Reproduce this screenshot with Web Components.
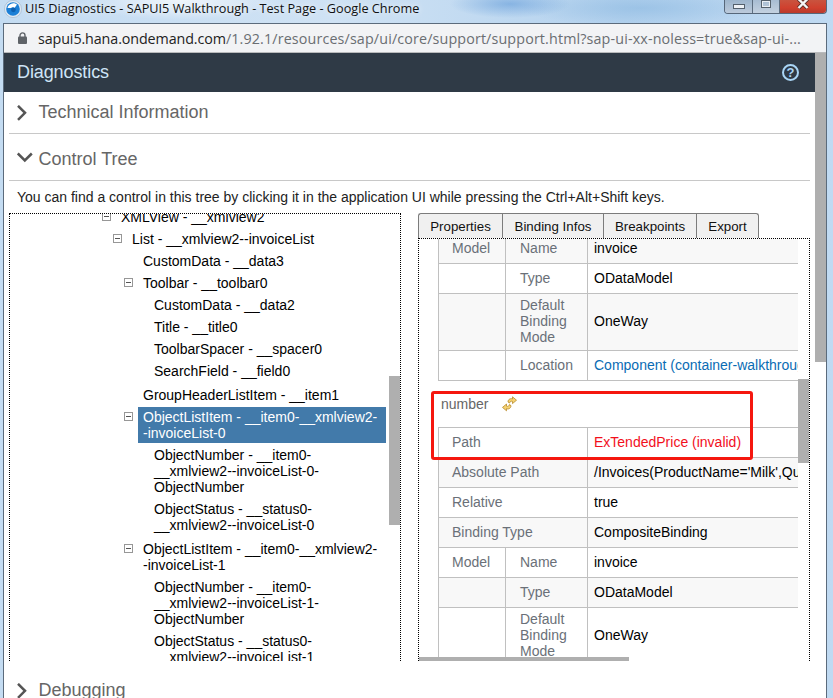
<!DOCTYPE html>
<html>
<head>
<meta charset="utf-8">
<title>UI5 Diagnostics</title>
<style>
  html, body { margin: 0; padding: 0; height: 100%; overflow: hidden; }
  body { font-family: "Liberation Sans", Arial, sans-serif; font-size: 14px; }
</style>
</head>
<body>
<diag-window>
  <diag-section heading="Technical Information" underline></diag-section>
  <diag-section heading="Control Tree" open underline gap="5">
    <diag-hint>You can find a control in this tree by clicking it in the application UI while pressing the Ctrl+Alt+Shift keys.</diag-hint>
    <diag-columns>
      <tree-panel>
        <tree-node toggle label="XMLView - __xmlview2">
          <tree-node toggle label="List - __xmlview2--invoiceList">
            <tree-node label="CustomData - __data3"></tree-node>
            <tree-node toggle label="Toolbar - __toolbar0">
              <tree-node label="CustomData - __data2"></tree-node>
              <tree-node label="Title - __title0"></tree-node>
              <tree-node label="ToolbarSpacer - __spacer0"></tree-node>
              <tree-node label="SearchField - __field0"></tree-node>
            </tree-node>
            <tree-node label="GroupHeaderListItem - __item1"></tree-node>
            <tree-node toggle selected label="ObjectListItem - __item0-__xmlview2-|-invoiceList-0">
              <tree-node label="ObjectNumber - __item0-|__xmlview2--invoiceList-0-|ObjectNumber"></tree-node>
              <tree-node label="ObjectStatus - __status0-|__xmlview2--invoiceList-0"></tree-node>
            </tree-node>
            <tree-node toggle label="ObjectListItem - __item0-__xmlview2-|-invoiceList-1">
              <tree-node label="ObjectNumber - __item0-|__xmlview2--invoiceList-1-|ObjectNumber"></tree-node>
              <tree-node label="ObjectStatus - __status0-|__xmlview2--invoiceList-1"></tree-node>
            </tree-node>
          </tree-node>
        </tree-node>
      </tree-panel>
      <tab-panel>
        <binding-table id="t1" style="margin-top:-6px"></binding-table>
        <binding-title>number</binding-title>
        <binding-table id="t2"></binding-table>
        <red-note></red-note>
      </tab-panel>
    </diag-columns>
  </diag-section>
  <diag-section heading="Debugging" gap="9"></diag-section>
</diag-window>

<script>
// window frame, title bar, address bar and the dark diagnostics header
const WINDOW_CSS = `
  :host {
    display: flex; flex-direction: column; width: 833px; height: 698px; overflow: hidden;
    background:
      radial-gradient(60px 14px at 510px 4px, rgba(90,150,215,0.55), transparent),
      radial-gradient(120px 18px at 640px 8px, rgba(140,185,225,0.6), transparent),
      radial-gradient(100px 20px at 180px 0, rgba(255,255,255,0.7), transparent),
      linear-gradient(90deg, #c4dcf2, #cfe2f4 40%, #b4d2ee 75%, #c0daf2);
  }
  .title { height: 23px; flex: none; display: flex; align-items: flex-start; }
  .logo { margin: 0 0 0 4px; flex: none; }
  .title-text {
    margin: 0 0 0 3px; font: 12.7px/17px "Open Sans", sans-serif; color: #101010;
    text-shadow: 0 0 6px rgba(255,255,255,0.9); white-space: nowrap;
  }
  .controls {
    margin-left: auto; margin-right: 6px; width: 103px; height: 14px; display: flex; box-sizing: border-box;
    border: 1px solid #56677a; border-top: 0; border-radius: 0 0 4px 4px; overflow: hidden;
  }
  .controls div { display: flex; justify-content: center; box-sizing: border-box; }
  .min { width: 28px; background: linear-gradient(#9db5cc, #bccadb); border-right: 1px solid #5c6d80; }
  .max { width: 27px; background: linear-gradient(#a7bcd2, #c3d1e0); border-right: 1px solid #5c6d80; }
  .close { flex: 1; background: linear-gradient(#c9543f, #d0402e 60%, #b93a2c); }
  .min i { width: 12px; height: 5px; margin-top: 4px; background: #eef2f6; border: 1px solid #54606c; box-sizing: border-box; }
  .max i { width: 10px; height: 8px; background: transparent; border: 2px solid #e8eef4; outline: 1px solid #54606c; outline-offset: -1px; box-sizing: border-box; }
  .frame {
    flex: 1; min-height: 0; margin: 0 6px 0 3px; border: 1px solid #5b6b7c; border-bottom: 0;
    display: flex; flex-direction: column; background: #fff;
  }
  .address {
    height: 28px; flex: none; display: flex; align-items: center; background: #f2f3f5;
    border-bottom: 1px solid #b9babc; box-sizing: content-box;
  }
  .lock { margin-left: 14px; flex: none; }
  .url { margin-left: 11px; font: 14.3px "Open Sans", sans-serif; color: #6a6e72; white-space: nowrap; letter-spacing: 0.14px; }
  .url b { font-weight: 400; color: #222; letter-spacing: -0.1px; }
  .body { flex: 1; min-height: 0; display: flex; }
  .main { flex: 1; min-width: 0; display: flex; flex-direction: column; overflow: hidden; }
  .bar { width: 11px; flex: none; background: #fff; }
  .bar div { height: 309px; background: #afafaf; }
  .head {
    height: 39px; flex: none; display: flex; align-items: center; justify-content: space-between;
    background: #2f3a46; padding: 0 16px 0 13px;
  }
  .head span { font-size: 18px; color: #cfe5f7; letter-spacing: -0.1px; }
  .help {
    width: 17px; height: 17px; border: 2px solid #a9d5f5; border-radius: 50%; box-sizing: border-box;
    display: flex; align-items: center; justify-content: center;
    font: bold 13px "Liberation Sans", sans-serif; color: #a9d5f5;
  }
  .sections { padding: 0 5px; flex: 1; min-height: 0; }
`

class DiagWindow extends HTMLElement {
  constructor() {
    super()
    this.attachShadow({ mode: 'open' })
    this.shadowRoot.innerHTML = `
      <style>${WINDOW_CSS}</style>
      <div class="title">
        <svg class="logo" width="18" height="18" viewBox="0 0 18 18">
          <circle cx="9" cy="9" r="8.6" fill="#dfe9f3" stroke="#9fb4c8" stroke-width="0.6"/>
          <circle cx="9" cy="9" r="6.8" fill="#1b7fd6"/>
          <path d="M3.5 8 A6 6 0 0 1 13 4.5 L10.5 8 A2.6 2.6 0 0 0 7 8 Z" fill="#fff"/>
          <circle cx="9.4" cy="9.8" r="2.4" fill="#0c5fb0"/>
        </svg>
        <span class="title-text">UI5 Diagnostics - SAPUI5 Walkthrough - Test Page - Google Chrome</span>
        <div class="controls">
          <div class="min"><i></i></div>
          <div class="max"><i></i></div>
          <div class="close">
            <svg width="14" height="9" viewBox="0 0 14 9"><path d="M2.5 -1 L11.5 8 M11.5 -1 L2.5 8" stroke="#58302a" stroke-width="4"/><path d="M2.5 -1 L11.5 8 M11.5 -1 L2.5 8" stroke="#f6f6f6" stroke-width="2.4"/></svg>
          </div>
        </div>
      </div>
      <div class="frame">
        <div class="address">
          <svg class="lock" width="9" height="12" viewBox="0 0 9 12">
            <path d="M2 5 V3.4 A2.5 2.5 0 0 1 7 3.4 V5" fill="none" stroke="#5f6368" stroke-width="1.4"/>
            <rect x="0" y="4.6" width="9" height="7.4" rx="1" fill="#5f6368"/>
          </svg>
          <span class="url"><b>sapui5.hana.ondemand.com</b>/1.92.1/resources/sap/ui/core/support/support.html?sap-ui-xx-noless=true&amp;sap-ui-...</span>
        </div>
        <div class="body">
          <div class="main">
            <div class="head"><span>Diagnostics</span><div class="help">?</div></div>
            <div class="sections"><slot></slot></div>
          </div>
          <div class="bar"><div></div></div>
        </div>
      </div>`
  }
}

// collapsible section with a chevron
class DiagSection extends HTMLElement {
  constructor() {
    super()
    this.attachShadow({ mode: 'open' })
  }

  connectedCallback() {
    const open = this.hasAttribute('open')
    const line = this.hasAttribute('underline')
    const gap = this.getAttribute('gap') || 0
    const chevron = open
      ? '<polyline points="0.8,1.5 7.8,8.5 14.8,1.5" />'
      : '<polyline points="1,0.8 8,7.8 1,14.8" />'
    this.shadowRoot.innerHTML = `
      <style>
        :host { display: block; margin-top: ${gap}px; }
        .head {
          height: 41px; display: flex; align-items: center; padding-left: 8px;
          font-size: 18px; color: #666; ${line ? 'border-bottom: 1px solid #c8c8c8;' : ''}
        }
        .chev { width: 22px; flex: none; display: flex; }
        .name { margin-left: -0.5px; }
        svg { fill: none; stroke: #555; stroke-width: 2.5; }
      </style>
      <div class="head">
        <span class="chev"><svg width="16" height="16" viewBox="0 0 16 16">${chevron}</svg></span>
        <span class="name">${this.getAttribute('heading')}</span>
      </div>
      <slot></slot>`
  }
}

class DiagHint extends HTMLElement {
  constructor() {
    super()
    this.attachShadow({ mode: 'open' })
    this.shadowRoot.innerHTML = `
      <style>:host { display: block; height: 32px; line-height: 33px; padding-left: 8px; color: #222; font-size: 14px; white-space: nowrap; }</style>
      <slot></slot>`
  }
}

class DiagColumns extends HTMLElement {
  constructor() {
    super()
    this.attachShadow({ mode: 'open' })
    this.shadowRoot.innerHTML = `
      <style>:host { display: grid; grid-template-columns: 392px 392px; column-gap: 17px; height: 448px; }</style>
      <slot></slot>`
  }
}

// left pane, the thumb lies over the scrolled content
class TreePanel extends HTMLElement {
  constructor() {
    super()
    this.attachShadow({ mode: 'open' })
    this.shadowRoot.innerHTML = `
      <style>
        :host {
          display: block; position: relative; overflow: hidden; box-sizing: border-box; height: 448px;
          border: 1px dotted #000; border-bottom: 0;
        }
        .scroll { margin-top: -7px; padding-left: 106px; }
        .thumb { position: absolute; right: 0; top: 162px; width: 11px; height: 149px; background: #afafaf; }
      </style>
      <div class="scroll"><slot></slot></div>
      <div class="thumb"></div>`
  }
}

class TreeNode extends HTMLElement {
  constructor() {
    super()
    this.attachShadow({ mode: 'open' })
  }

  connectedCallback() {
    const label = (this.getAttribute('label') || '').split('|').join('<br>')
    const toggle = this.hasAttribute('toggle')
      ? `<svg class="toggle" width="9" height="9" viewBox="0 0 9 9">
           <rect x="0.5" y="0.5" width="8" height="8" fill="#fff" stroke="#979797"/>
           <path d="M2 4.5 H7" stroke="#555"/>
         </svg>`
      : ''
    const selected = this.hasAttribute('selected')
    this.shadowRoot.innerHTML = `
      <style>
        :host { display: block; font-size: 14px; line-height: 16px; color: #000; }
        .row {
          position: relative; margin: 0 14px 2px 0; padding: 2px 5px; white-space: nowrap;
          ${selected ? 'background: #427aaa; color: #fff;' : ''}
        }
        .toggle { position: absolute; left: -14px; top: 5px; }
        .kids { padding-left: 11px; }
        .kids.has { padding-bottom: 2px; }
      </style>
      <div class="row">${toggle}${label}</div>
      <div class="kids ${this.children.length ? 'has' : ''}"><slot></slot></div>`
  }
}

// right pane with tab strip
const TABS = [['Properties', 84], ['Binding Infos', 101], ['Breakpoints', 93], ['Export', 63]]

class TabPanel extends HTMLElement {
  constructor() {
    super()
    this.attachShadow({ mode: 'open' })
    this.shadowRoot.innerHTML = `
      <style>
        :host { display: flex; flex-direction: column; height: 448px; font-size: 14px; }
        .tabs { height: 25px; flex: none; display: flex; }
        .tab {
          box-sizing: border-box; height: 25px; line-height: 25px; text-align: center; background: #f0f0f0; color: #111;
          font-size: 13.3px; border: 1px solid #7c7c7c; border-bottom: 0; border-right: 0; white-space: nowrap;
        }
        .tab:first-child { border-top-left-radius: 3px; }
        .tab:last-child { border-right: 1px solid #7c7c7c; border-top-right-radius: 3px; }
        .view {
          flex: 1; min-height: 0; position: relative; overflow: hidden; box-sizing: border-box;
          border: 1px dotted #000; border-bottom: 0;
        }
        .clip { width: 379px; height: 100%; overflow: hidden; }
        .vthumb { position: absolute; right: 0; top: 140px; width: 11px; height: 84px; background: #afafaf; }
        .hthumb { position: absolute; left: -1px; bottom: 0; width: 211px; height: 4px; background: #afafaf; }
      </style>
      <div class="tabs">${TABS.map(([t, w]) => `<div class="tab" style="width:${w}px">${t}</div>`).join('')}</div>
      <div class="view">
        <div class="clip"><slot></slot></div>
        <div class="vthumb"></div>
        <div class="hthumb"></div>
      </div>`
  }
}

const MODEL_ROWS = (shade, location) => [
  { group: 'Model', key: 'Name', value: 'invoice', bg: shade },
  { key: 'Type', value: 'ODataModel', bg: !shade },
  { key: 'Default<br>Binding<br>Mode', value: 'OneWay', bg: shade, tall: true },
  ...(location ? [{ key: 'Location', value: 'Component (container-walkthrough)', bg: !shade, link: true }] : [])
]

const TABLES = {
  t1: MODEL_ROWS(true, true),
  t2: [
    { wide: 'Path', value: 'ExTendedPrice (invalid)', red: true },
    { wide: 'Absolute Path', value: "/Invoices(ProductName='Milk',Quantity=4,ShipperName='ACME')", bg: true },
    { wide: 'Relative', value: 'true' },
    { wide: 'Binding Type', value: 'CompositeBinding', bg: true },
    ...MODEL_ROWS(false, false)
  ]
}

class BindingTable extends HTMLElement {
  constructor() {
    super()
    this.attachShadow({ mode: 'open' })
  }

  connectedCallback() {
    const rows = TABLES[this.id].map(r => {
      const cls = [r.bg ? 'bg' : '', r.tall ? 'tall' : ''].join(' ')
      const valCls = r.red ? 'red' : r.link ? 'link' : ''
      const keys = r.wide
        ? `<td colspan="2" class="key wide">${r.wide}</td>`
        : `<td class="key first">${r.group || ''}</td><td class="key second">${r.key}</td>`
      return `<tr class="${cls}">${keys}<td class="val ${valCls}">${r.value}</td></tr>`
    }).join('')
    this.shadowRoot.innerHTML = `
      <style>
        :host { display: block; margin-left: 19px; }
        table { border-collapse: separate; border-spacing: 0; table-layout: fixed; width: 600px; border-top: 1px solid #c0c0c0; }
        td {
          box-sizing: border-box; height: 30px; border-left: 1px solid #c0c0c0; border-bottom: 1px solid #c0c0c0;
          font-size: 14px; line-height: 16px; padding: 0 6px 2px; vertical-align: middle; white-space: nowrap; overflow: hidden;
        }
        tr.tall td { height: 57px; }
        tr.bg td { background: #f8f8f8; }
        .key { color: #6a7078; }
        .first { padding-left: 13px; }
        .second { padding-left: 14px; }
        .wide { padding-left: 13px; }
        .val { color: #000; }
        .link { color: #0a6cb4; }
        .red { color: #f2101c; }
      </style>
      <table>
        <colgroup><col style="width:67px"><col style="width:82px"><col></colgroup>
        ${rows}
      </table>`
  }
}

class BindingTitle extends HTMLElement {
  constructor() {
    super()
    this.attachShadow({ mode: 'open' })
    this.shadowRoot.innerHTML = `
      <style>
        :host { display: flex; align-items: center; height: 46px; padding: 0 0 0 22px; box-sizing: border-box; color: #666; font-size: 14px; line-height: 16px; }
        svg { margin: 0 0 0 14px; }
      </style>
      <slot></slot>
      <svg width="15" height="16" viewBox="0 0 15 16">
        <path d="M6 6 C6 3 9 2 10.5 3 L10.5 0.8 L14.5 4.2 L10.5 7.6 L10.5 5.4 C9 4.8 8 5.6 7.6 7 Z" fill="#f5d272" stroke="#b88a2a" stroke-width="0.8"/>
        <path d="M9 9.6 C9 12.6 6 13.6 4.5 12.6 L4.5 14.8 L0.5 11.4 L4.5 8 L4.5 10.2 C6 10.8 7 10 7.4 8.6 Z" fill="#f5d272" stroke="#b88a2a" stroke-width="0.8"/>
      </svg>`
  }
}

// hand drawn red frame that lies over the table
class RedNote extends HTMLElement {
  constructor() {
    super()
    this.attachShadow({ mode: 'open' })
    this.shadowRoot.innerHTML = `
      <style>
        :host {
          position: absolute; left: 12px; top: 152px; width: 322px; height: 69px; box-sizing: border-box;
          border: 3px solid #f5170f; border-radius: 3px;
        }
      </style>`
  }
}

customElements.define('diag-window', DiagWindow)
customElements.define('diag-section', DiagSection)
customElements.define('diag-hint', DiagHint)
customElements.define('diag-columns', DiagColumns)
customElements.define('tree-panel', TreePanel)
customElements.define('tree-node', TreeNode)
customElements.define('tab-panel', TabPanel)
customElements.define('binding-table', BindingTable)
customElements.define('binding-title', BindingTitle)
customElements.define('red-note', RedNote)
</script>
</body>
</html>
